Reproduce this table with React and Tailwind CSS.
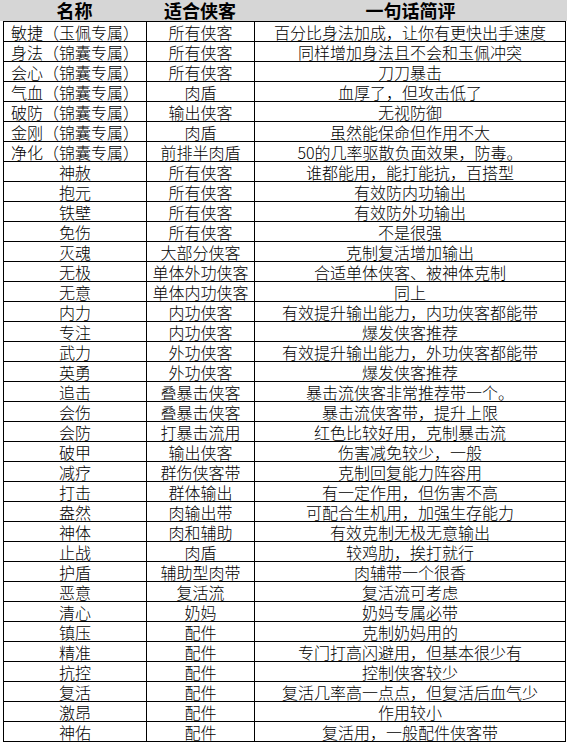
const rows = [
  ["敏捷（玉佩专属）", "所有侠客", "百分比身法加成，让你有更快出手速度"],
  ["身法（锦囊专属）", "所有侠客", "同样增加身法且不会和玉佩冲突"],
  ["会心（锦囊专属）", "所有侠客", "刀刀暴击"],
  ["气血（锦囊专属）", "肉盾", "血厚了，但攻击低了"],
  ["破防（锦囊专属）", "输出侠客", "无视防御"],
  ["金刚（锦囊专属）", "肉盾", "虽然能保命但作用不大"],
  ["净化（锦囊专属）", "前排半肉盾", "50的几率驱散负面效果，防毒。"],
  ["神赦", "所有侠客", "谁都能用，能打能抗，百搭型"],
  ["抱元", "所有侠客", "有效防内功输出"],
  ["铁壁", "所有侠客", "有效防外功输出"],
  ["免伤", "所有侠客", "不是很强"],
  ["灭魂", "大部分侠客", "克制复活增加输出"],
  ["无极", "单体外功侠客", "合适单体侠客、被神体克制"],
  ["无意", "单体内功侠客", "同上"],
  ["内力", "内功侠客", "有效提升输出能力，内功侠客都能带"],
  ["专注", "内功侠客", "爆发侠客推荐"],
  ["武力", "外功侠客", "有效提升输出能力，外功侠客都能带"],
  ["英勇", "外功侠客", "爆发侠客推荐"],
  ["追击", "叠暴击侠客", "暴击流侠客非常推荐带一个。"],
  ["会伤", "叠暴击侠客", "暴击流侠客带，提升上限"],
  ["会防", "打暴击流用", "红色比较好用，克制暴击流"],
  ["破甲", "输出侠客", "伤害减免较少，一般"],
  ["减疗", "群伤侠客带", "克制回复能力阵容用"],
  ["打击", "群体输出", "有一定作用，但伤害不高"],
  ["盎然", "肉输出带", "可配合生机用，加强生存能力"],
  ["神体", "肉和辅助", "有效克制无极无意输出"],
  ["止战", "肉盾", "较鸡肋，挨打就行"],
  ["护盾", "辅助型肉带", "肉辅带一个很香"],
  ["恶意", "复活流", "复活流可考虑"],
  ["清心", "奶妈", "奶妈专属必带"],
  ["镇压", "配件", "克制奶妈用的"],
  ["精准", "配件", "专门打高闪避用，但基本很少有"],
  ["抗控", "配件", "控制侠客较少"],
  ["复活", "配件", "复活几率高一点点，但复活后血气少"],
  ["激昂", "配件", "作用较小"],
  ["神佑", "配件", "复活用，一般配件侠客带"],
];

const font = { fontFamily: '"Noto Sans CJK SC", "DejaVu Sans", sans-serif' };

export default function App() {
  return (
    <div className="w-[567px] h-[744px] bg-white text-black overflow-hidden" style={font}>
      <div className="h-[21px] bg-[#d6d6d6] grid grid-cols-[146px_108px_313px] items-center text-[18px] font-bold leading-[21px]">
        <div className="text-center pl-[3px]">名称</div>
        <div className="text-center">适合侠客</div>
        <div className="text-center">一句话简评</div>
      </div>
      <div className="ml-[3px] w-[563px] h-[721px] flex flex-col border-t border-l border-r border-black">
        {rows.map((r, i) => (
          <div
            key={i}
            className="flex-1 grid grid-cols-[142px_108px_311px] items-end border-b border-black text-[16px] font-light leading-[18px] whitespace-nowrap"
          >
            <div className="text-center">{r[0]}</div>
            <div className="text-center border-l border-black h-full flex items-end justify-center">{r[1]}</div>
            <div className="text-center border-l border-black h-full flex items-end justify-center">{r[2]}</div>
          </div>
        ))}
      </div>
    </div>
  );
}
